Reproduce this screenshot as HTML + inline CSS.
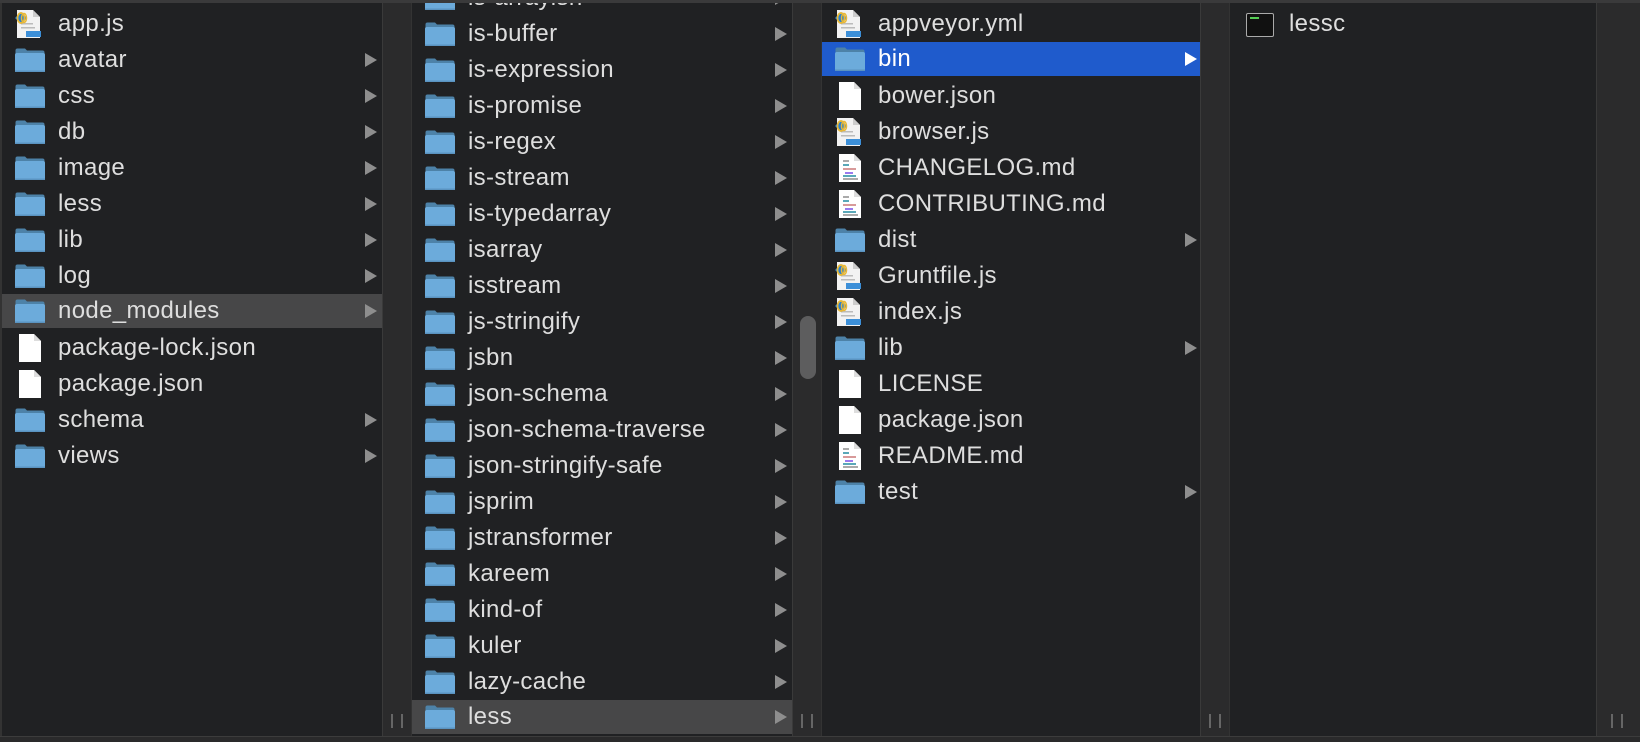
<!DOCTYPE html>
<html><head><meta charset="utf-8"><style>
*{margin:0;padding:0;box-sizing:border-box}
body{width:1640px;height:742px;background:#202123;position:relative;overflow:hidden;font-family:"Liberation Sans",sans-serif;font-size:24px;color:#dedede}
.top{position:absolute;left:0;top:0;width:1640px;height:3px;background:#3a3a3b}
.bot{position:absolute;left:0;top:736px;width:1640px;height:6px;background:#2a2a2b;border-top:1px solid #3c3c3c}
.col{position:absolute;top:3px;height:733px;overflow:hidden;background:#202123}
.gut{position:absolute;top:3px;height:733px;background:#2b2b2c;border-left:1px solid #3a3a3a;border-right:1px solid #333}
.grip{position:absolute;bottom:8px;left:50%;margin-left:-6px;width:12px;height:14px;border-left:2px solid #666;border-right:2px solid #666}
.row{position:absolute;left:0;right:0;height:36px}
.row .ic{position:absolute;left:13px;top:6px}
.row .t{position:absolute;left:56px;top:0;line-height:36px;letter-spacing:0.35px;white-space:nowrap}
.row .a{position:absolute;right:5px;top:11px;width:0;height:0;border-left:12px solid #8e8e8e;border-top:7px solid transparent;border-bottom:7px solid transparent}
.sel{background:#474748}
.blue{background:#1f5bcc;color:#fff}
.blue .a{border-left-color:#fff}
</style></head><body>
<div class="top"></div>

<svg width="0" height="0" style="position:absolute"><defs>
<symbol id="fd" viewBox="0 0 30 24"><path d="M0.5 4V2.5Q0.5 0.5 2.5 0.5H10L12 2.5H27.5Q29.5 2.5 29.5 4.5V8H0.5Z" fill="#4d82a8"/><rect x="0" y="5" width="30" height="19" rx="1.8" fill="#6cabdb"/><rect x="0" y="22.5" width="30" height="1.5" fill="#5a93c0"/></symbol>
<symbol id="dc" viewBox="0 0 22 28"><path d="M0 0H15L22 7V28H0Z" fill="#fff"/><path d="M15 0V7H22Z" fill="#ddd"/></symbol>
<symbol id="md" viewBox="0 0 22 28"><path d="M0 0H15L22 7V28H0Z" fill="#fff"/><path d="M15 0V7H22Z" fill="#ddd"/><rect x="4" y="6" width="6" height="2" fill="#aaa"/><rect x="4" y="10" width="6" height="2" fill="#5aa8b8"/><rect x="4" y="14" width="13" height="2" fill="#d89a9a"/><rect x="6" y="18" width="8" height="2" fill="#9a7aee"/><rect x="4" y="21" width="13" height="2" fill="#5aa8b8"/><rect x="4" y="24" width="15" height="2" fill="#aaa"/></symbol>
<symbol id="js" viewBox="0 0 30 30"><path d="M4 1H20L27 8V29H4Z" fill="#f2f2f2"/><path d="M20 1V8H27Z" fill="#ccc"/><rect x="8" y="14" width="12" height="1.5" fill="#bbb"/><rect x="8" y="18" width="14" height="1.5" fill="#bbb"/><rect x="13" y="22" width="15" height="6" fill="#3c8fd8"/><path d="M8 3L14 9L8 15L2 9Z" fill="#2a7fcf"/><ellipse cx="8" cy="9" rx="3.5" ry="5" fill="none" stroke="#e8b838" stroke-width="1.8"/><ellipse cx="11" cy="9" rx="2.5" ry="4.5" fill="none" stroke="#e8b838" stroke-width="1.5"/></symbol>
</defs></svg>

<!-- column 1 -->
<div class="col" style="left:0;width:382px;border-left:2px solid #333">
<div class="row" style="top:3px"><svg class="ic" style="left:11px;top:3px" width="30" height="30"><use href="#js"/></svg><span class="t">app.js</span></div>
<div class="row" style="top:39px"><svg class="ic" width="30" height="24"><use href="#fd"/></svg><span class="t">avatar</span><i class="a"></i></div>
<div class="row" style="top:75px"><svg class="ic" width="30" height="24"><use href="#fd"/></svg><span class="t">css</span><i class="a"></i></div>
<div class="row" style="top:111px"><svg class="ic" width="30" height="24"><use href="#fd"/></svg><span class="t">db</span><i class="a"></i></div>
<div class="row" style="top:147px"><svg class="ic" width="30" height="24"><use href="#fd"/></svg><span class="t">image</span><i class="a"></i></div>
<div class="row" style="top:183px"><svg class="ic" width="30" height="24"><use href="#fd"/></svg><span class="t">less</span><i class="a"></i></div>
<div class="row" style="top:219px"><svg class="ic" width="30" height="24"><use href="#fd"/></svg><span class="t">lib</span><i class="a"></i></div>
<div class="row" style="top:255px"><svg class="ic" width="30" height="24"><use href="#fd"/></svg><span class="t">log</span><i class="a"></i></div>
<div class="row sel" style="top:291px;height:34px"><svg class="ic" style="top:5px" width="30" height="24"><use href="#fd"/></svg><span class="t" style="line-height:34px">node_modules</span><i class="a" style="top:10px"></i></div>
<div class="row" style="top:327px"><svg class="ic" style="left:17px;top:4px" width="22" height="28"><use href="#dc"/></svg><span class="t">package-lock.json</span></div>
<div class="row" style="top:363px"><svg class="ic" style="left:17px;top:4px" width="22" height="28"><use href="#dc"/></svg><span class="t">package.json</span></div>
<div class="row" style="top:399px"><svg class="ic" width="30" height="24"><use href="#fd"/></svg><span class="t">schema</span><i class="a"></i></div>
<div class="row" style="top:435px"><svg class="ic" width="30" height="24"><use href="#fd"/></svg><span class="t">views</span><i class="a"></i></div>
</div>
<div class="gut" style="left:382px;width:30px"><div class="grip"></div></div>

<!-- column 2 -->
<div class="col" style="left:412px;width:380px">
<div class="row" style="top:-23px"><svg class="ic" width="30" height="24"><use href="#fd"/></svg><span class="t">is-arrayish</span><i class="a"></i></div>
<div class="row" style="top:13px"><svg class="ic" width="30" height="24"><use href="#fd"/></svg><span class="t">is-buffer</span><i class="a"></i></div>
<div class="row" style="top:49px"><svg class="ic" width="30" height="24"><use href="#fd"/></svg><span class="t">is-expression</span><i class="a"></i></div>
<div class="row" style="top:85px"><svg class="ic" width="30" height="24"><use href="#fd"/></svg><span class="t">is-promise</span><i class="a"></i></div>
<div class="row" style="top:121px"><svg class="ic" width="30" height="24"><use href="#fd"/></svg><span class="t">is-regex</span><i class="a"></i></div>
<div class="row" style="top:157px"><svg class="ic" width="30" height="24"><use href="#fd"/></svg><span class="t">is-stream</span><i class="a"></i></div>
<div class="row" style="top:193px"><svg class="ic" width="30" height="24"><use href="#fd"/></svg><span class="t">is-typedarray</span><i class="a"></i></div>
<div class="row" style="top:229px"><svg class="ic" width="30" height="24"><use href="#fd"/></svg><span class="t">isarray</span><i class="a"></i></div>
<div class="row" style="top:265px"><svg class="ic" width="30" height="24"><use href="#fd"/></svg><span class="t">isstream</span><i class="a"></i></div>
<div class="row" style="top:301px"><svg class="ic" width="30" height="24"><use href="#fd"/></svg><span class="t">js-stringify</span><i class="a"></i></div>
<div class="row" style="top:337px"><svg class="ic" width="30" height="24"><use href="#fd"/></svg><span class="t">jsbn</span><i class="a"></i></div>
<div class="row" style="top:373px"><svg class="ic" width="30" height="24"><use href="#fd"/></svg><span class="t">json-schema</span><i class="a"></i></div>
<div class="row" style="top:409px"><svg class="ic" width="30" height="24"><use href="#fd"/></svg><span class="t">json-schema-traverse</span><i class="a"></i></div>
<div class="row" style="top:445px"><svg class="ic" width="30" height="24"><use href="#fd"/></svg><span class="t">json-stringify-safe</span><i class="a"></i></div>
<div class="row" style="top:481px"><svg class="ic" width="30" height="24"><use href="#fd"/></svg><span class="t">jsprim</span><i class="a"></i></div>
<div class="row" style="top:517px"><svg class="ic" width="30" height="24"><use href="#fd"/></svg><span class="t">jstransformer</span><i class="a"></i></div>
<div class="row" style="top:553px"><svg class="ic" width="30" height="24"><use href="#fd"/></svg><span class="t">kareem</span><i class="a"></i></div>
<div class="row" style="top:589px"><svg class="ic" width="30" height="24"><use href="#fd"/></svg><span class="t">kind-of</span><i class="a"></i></div>
<div class="row" style="top:625px"><svg class="ic" width="30" height="24"><use href="#fd"/></svg><span class="t">kuler</span><i class="a"></i></div>
<div class="row" style="top:661px"><svg class="ic" width="30" height="24"><use href="#fd"/></svg><span class="t">lazy-cache</span><i class="a"></i></div>
<div class="row sel" style="top:697px;height:34px"><svg class="ic" style="top:5px" width="30" height="24"><use href="#fd"/></svg><span class="t" style="line-height:34px">less</span><i class="a" style="top:10px"></i></div>
</div>
<div class="gut" style="left:792px;width:30px"><div style="position:absolute;left:7px;top:313px;width:16px;height:63px;border-radius:8px;background:#5d5d5e"></div><div class="grip"></div></div>

<!-- column 3 -->
<div class="col" style="left:822px;width:380px">
<div class="row" style="top:3px"><svg class="ic" style="left:11px;top:3px" width="30" height="30"><use href="#js"/></svg><span class="t">appveyor.yml</span></div>
<div class="row blue" style="top:39px;height:34px"><svg class="ic" style="top:5px" width="30" height="24"><use href="#fd"/></svg><span class="t" style="line-height:34px">bin</span><i class="a" style="top:10px"></i></div>
<div class="row" style="top:75px"><svg class="ic" style="left:17px;top:4px" width="22" height="28"><use href="#dc"/></svg><span class="t">bower.json</span></div>
<div class="row" style="top:111px"><svg class="ic" style="left:11px;top:3px" width="30" height="30"><use href="#js"/></svg><span class="t">browser.js</span></div>
<div class="row" style="top:147px"><svg class="ic" style="left:17px;top:4px" width="22" height="28"><use href="#md"/></svg><span class="t">CHANGELOG.md</span></div>
<div class="row" style="top:183px"><svg class="ic" style="left:17px;top:4px" width="22" height="28"><use href="#md"/></svg><span class="t">CONTRIBUTING.md</span></div>
<div class="row" style="top:219px"><svg class="ic" width="30" height="24"><use href="#fd"/></svg><span class="t">dist</span><i class="a"></i></div>
<div class="row" style="top:255px"><svg class="ic" style="left:11px;top:3px" width="30" height="30"><use href="#js"/></svg><span class="t">Gruntfile.js</span></div>
<div class="row" style="top:291px"><svg class="ic" style="left:11px;top:3px" width="30" height="30"><use href="#js"/></svg><span class="t">index.js</span></div>
<div class="row" style="top:327px"><svg class="ic" width="30" height="24"><use href="#fd"/></svg><span class="t">lib</span><i class="a"></i></div>
<div class="row" style="top:363px"><svg class="ic" style="left:17px;top:4px" width="22" height="28"><use href="#dc"/></svg><span class="t">LICENSE</span></div>
<div class="row" style="top:399px"><svg class="ic" style="left:17px;top:4px" width="22" height="28"><use href="#dc"/></svg><span class="t">package.json</span></div>
<div class="row" style="top:435px"><svg class="ic" style="left:17px;top:4px" width="22" height="28"><use href="#md"/></svg><span class="t">README.md</span></div>
<div class="row" style="top:471px"><svg class="ic" width="30" height="24"><use href="#fd"/></svg><span class="t">test</span><i class="a"></i></div>
</div>
<div class="gut" style="left:1200px;width:30px"><div class="grip"></div></div>

<!-- column 4 -->
<div class="col" style="left:1230px;width:366px">
<div class="row" style="top:3px"><div class="ic" style="left:16px;top:7px;width:28px;height:24px;background:#111;border:1.5px solid #aaa;border-radius:2px"><div style="position:absolute;left:3px;top:3px;width:9px;height:2px;background:#5c5"></div></div><span class="t" style="left:59px">lessc</span></div>
</div>
<div class="gut" style="left:1596px;width:44px;border-right:none"><div class="grip" style="margin-left:-8px"></div></div>

<div class="bot"></div>
</body></html>
